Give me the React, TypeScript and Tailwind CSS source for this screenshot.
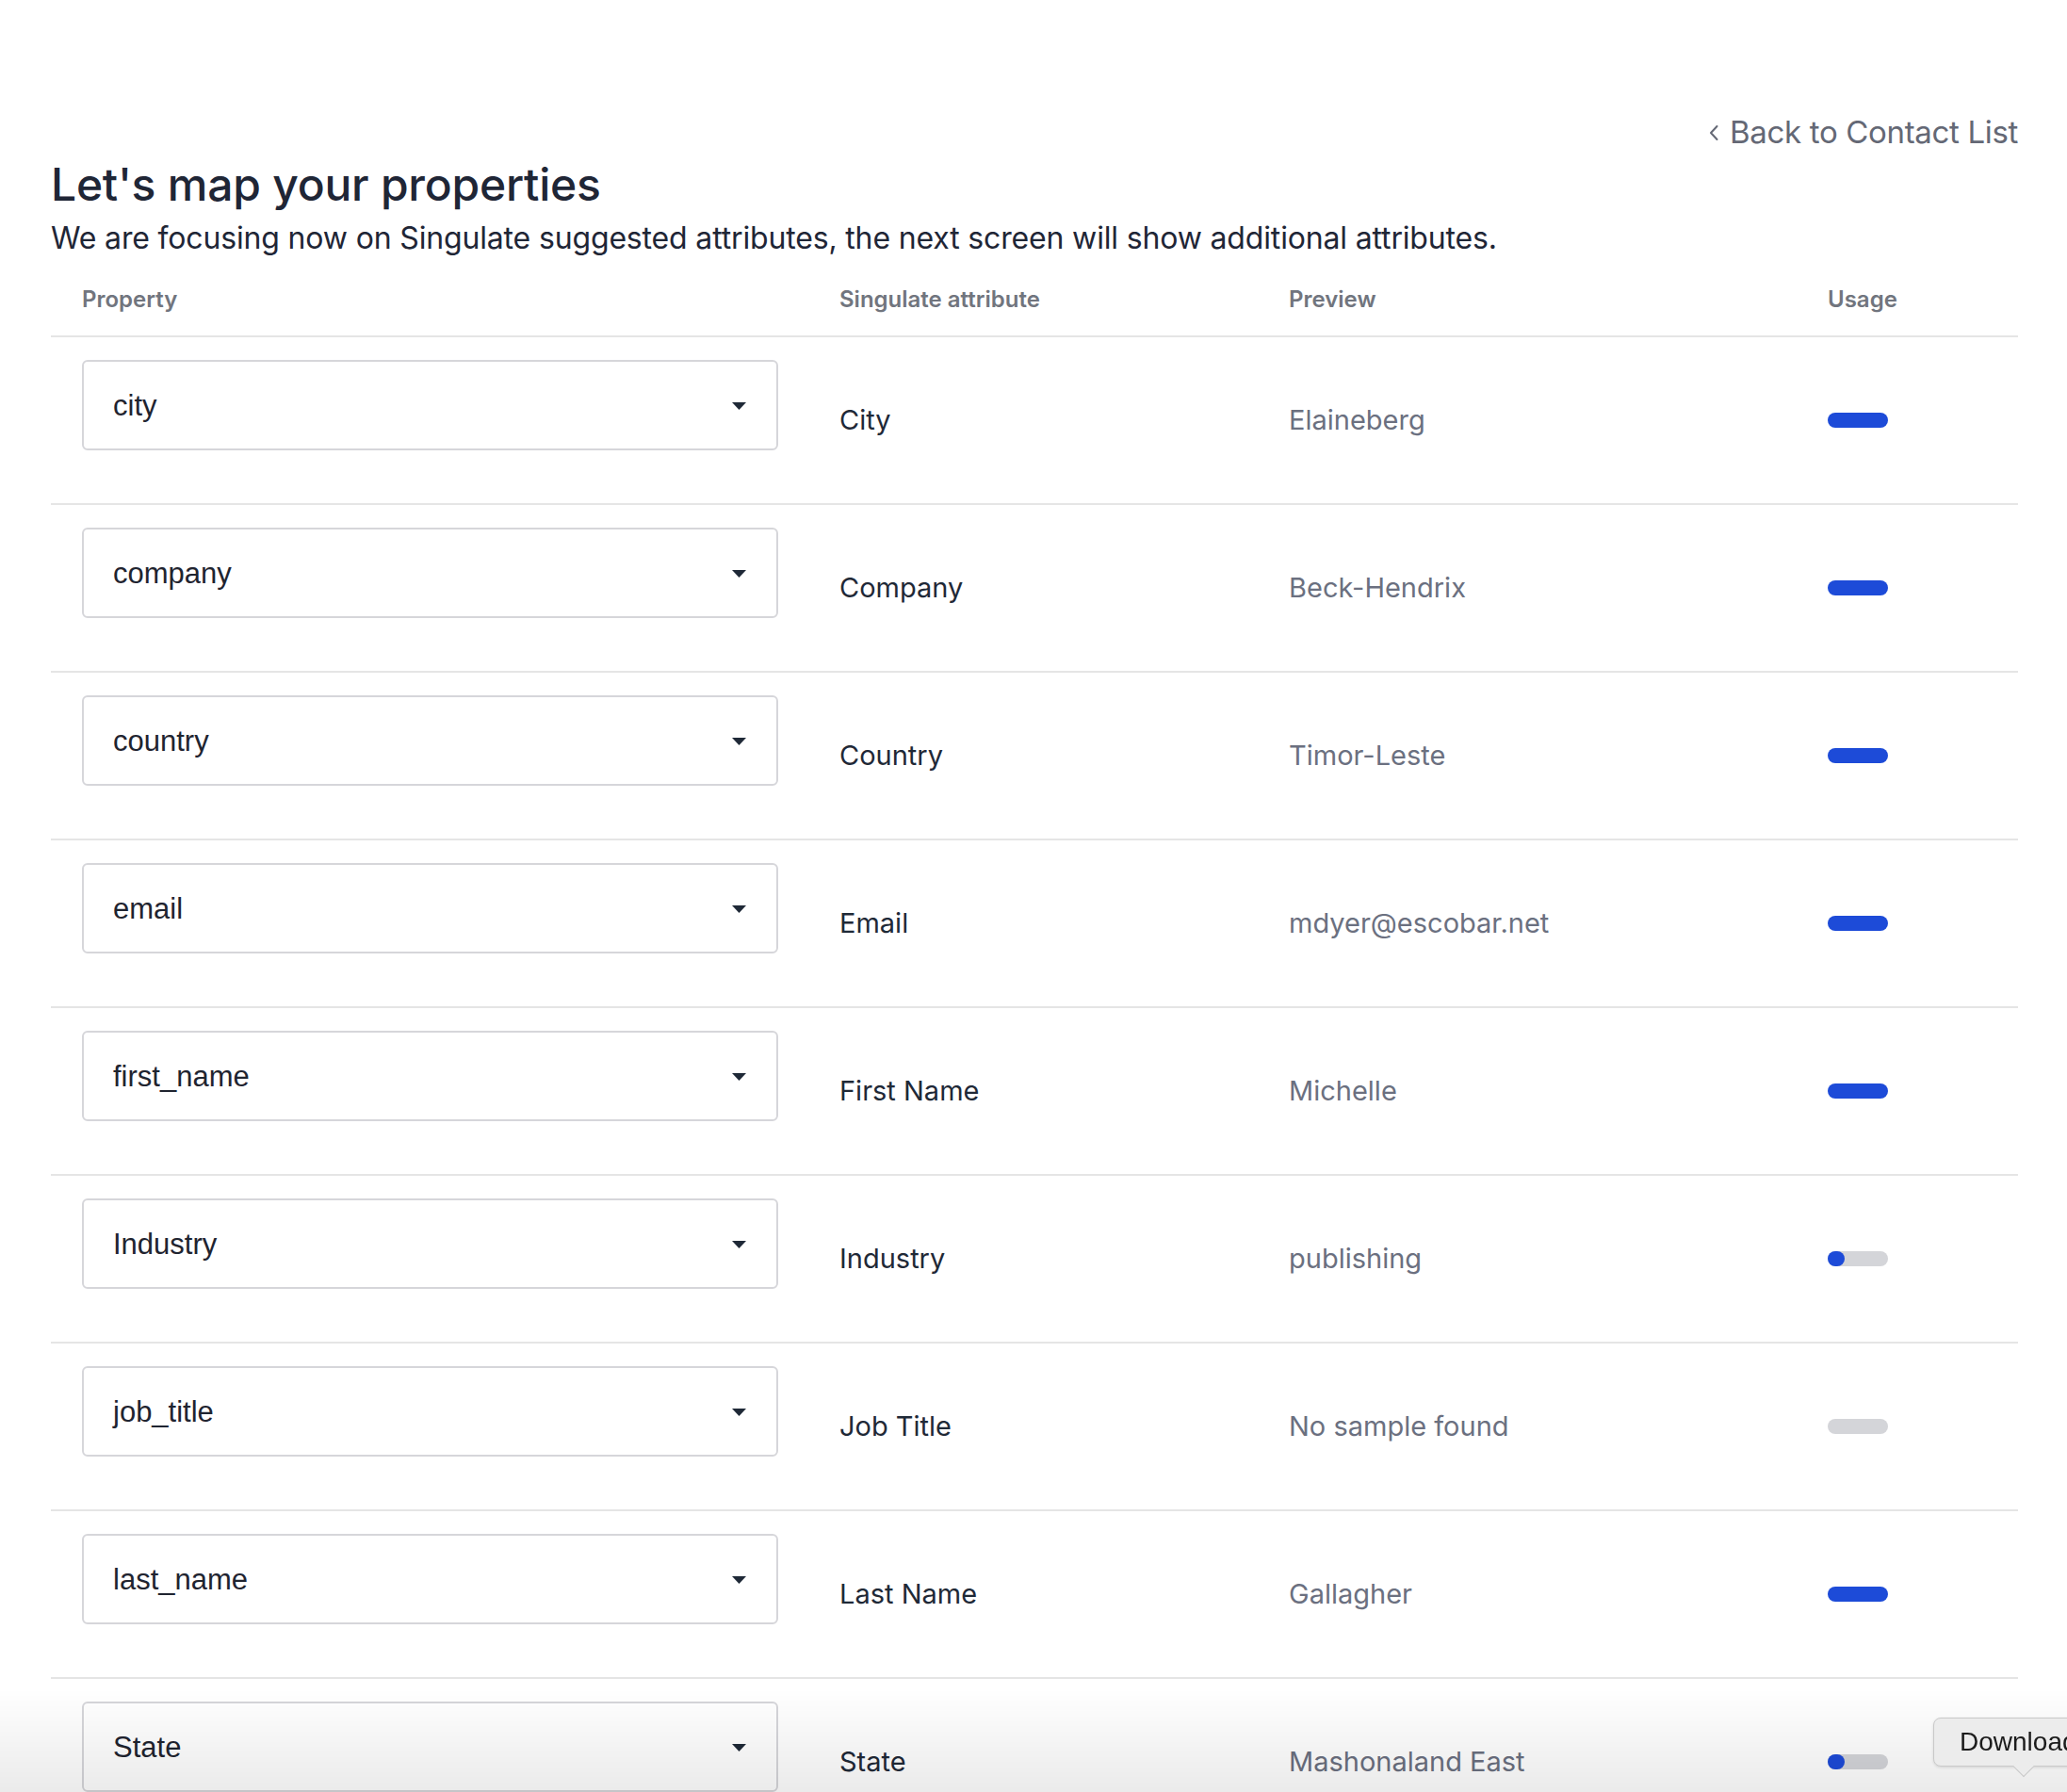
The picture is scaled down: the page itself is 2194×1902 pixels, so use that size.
import React from "react";

// ── Data ──────────────────────────────────────────────────────────────────────

type Usage = "full" | "low" | "none";

interface Mapping {
  property: string;
  attribute: string;
  preview: string;
  usage: Usage;
}

const MAPPINGS: Mapping[] = [
  { property: "city", attribute: "City", preview: "Elaineberg", usage: "full" },
  { property: "company", attribute: "Company", preview: "Beck-Hendrix", usage: "full" },
  { property: "country", attribute: "Country", preview: "Timor-Leste", usage: "full" },
  { property: "email", attribute: "Email", preview: "mdyer@escobar.net", usage: "full" },
  { property: "first_name", attribute: "First Name", preview: "Michelle", usage: "full" },
  { property: "Industry", attribute: "Industry", preview: "publishing", usage: "low" },
  { property: "job_title", attribute: "Job Title", preview: "No sample found", usage: "none" },
  { property: "last_name", attribute: "Last Name", preview: "Gallagher", usage: "full" },
  { property: "State", attribute: "State", preview: "Mashonaland East", usage: "low" },
];

const GRID = "grid grid-cols-[837px_477px_572px_1fr]";

// ── Pieces ────────────────────────────────────────────────────────────────────

function UsageBar({ usage }: { usage: Usage }) {
  if (usage === "full") {
    return <div className="h-[16px] w-[64px] rounded-full bg-[#1d4bd8]" />;
  }
  return (
    <div className="h-[16px] w-[64px] rounded-full bg-[#d4d5d9] flex">
      {usage === "low" && <div className="h-[16px] w-[18px] rounded-full bg-[#1d4bd8]" />}
    </div>
  );
}

function PropertySelect({ value }: { value: string }) {
  return (
    <div className="h-[96px] w-[739px] rounded-[6px] border-2 border-[#d6d6da] bg-white flex items-center justify-between pl-[31px] pr-[32px]">
      <span className="pt-[3px] text-[31px] text-[#1f2430] font-['Liberation_Sans',Arial,sans-serif]">{value}</span>
      <svg width="15" height="8" viewBox="0 0 15 8" aria-hidden="true" className="mt-[3px]">
        <path d="M0 0h15L7.5 8z" fill="#1f2937" />
      </svg>
    </div>
  );
}

function MappingRow({ row }: { row: Mapping }) {
  return (
    <div className={`${GRID} h-[178px] items-center border-b-2 border-[#e5e5e5]`}>
      <div className="self-start pt-[24px] pl-[33px]">
        <PropertySelect value={row.property} />
      </div>
      <div className="text-[29px] text-[#1f2937]">{row.attribute}</div>
      <div className="text-[29px] text-[#6b7080]">{row.preview}</div>
      <div>
        <UsageBar usage={row.usage} />
      </div>
    </div>
  );
}

// ── Page ──────────────────────────────────────────────────────────────────────

export default function App() {
  return (
    <div className="min-h-screen bg-white font-['Inter',sans-serif]">
      <div className="pl-[54px] pr-[52px] pt-[121px]">
        {/* Back link */}
        <div className="flex justify-end h-[40px] items-center">
          <a href="#" className="flex items-center gap-[11px] text-[33px] tracking-[-0.01em] text-[#646875]">
            <svg width="12" height="20" viewBox="0 0 12 20" aria-hidden="true">
              <path d="M9.5 3L3 10l6.5 7" fill="none" stroke="#646875" strokeWidth="2" strokeLinecap="round" strokeLinejoin="round" />
            </svg>
            Back to Contact List
          </a>
        </div>

        {/* Title */}
        <h1 className="mt-[6px] text-[48px] leading-[1.2] font-medium tracking-[-0.005em] text-[#1f2636]">
          Let's map your properties
        </h1>
        <p className="mt-[9px] text-[32px] leading-[1.2] tracking-[-0.005em] text-[#1f2636]">
          We are focusing now on Singulate suggested attributes, the next screen will show additional attributes.
        </p>

        {/* Table header */}
        <div className={`${GRID} pt-[32px] pb-[23px] border-b-2 border-[#e5e5e5] text-[24px] leading-[1.2] font-semibold text-[#71757e]`}>
          <div className="pl-[33px]">Property</div>
          <div>Singulate attribute</div>
          <div>Preview</div>
          <div>Usage</div>
        </div>

        {/* Rows */}
        {MAPPINGS.map((row) => (
          <MappingRow key={row.property} row={row} />
        ))}
      </div>

      {/* Bottom fade */}
      <div className="pointer-events-none fixed inset-x-0 bottom-0 h-[110px] bg-linear-to-b from-black/0 to-black/[0.08]" />

      {/* Download tooltip */}
      <div className="fixed left-[2052px] top-[1823px]">
        <div className="relative h-[52px] w-[220px] rounded-[8px] border border-[#c9c9c9] bg-[#ececec] pl-[27px] flex items-center shadow-[0_1px_3px_rgba(0,0,0,0.12)]">
          <span className="text-[28px] text-[#1c1c1c] font-['Liberation_Sans',Arial,sans-serif]">Download</span>
          <div className="absolute left-[87px] top-[43px] h-[16px] w-[16px] rotate-45 border-b border-r border-[#c9c9c9] bg-[#ececec]" />
        </div>
      </div>
    </div>
  );
}
